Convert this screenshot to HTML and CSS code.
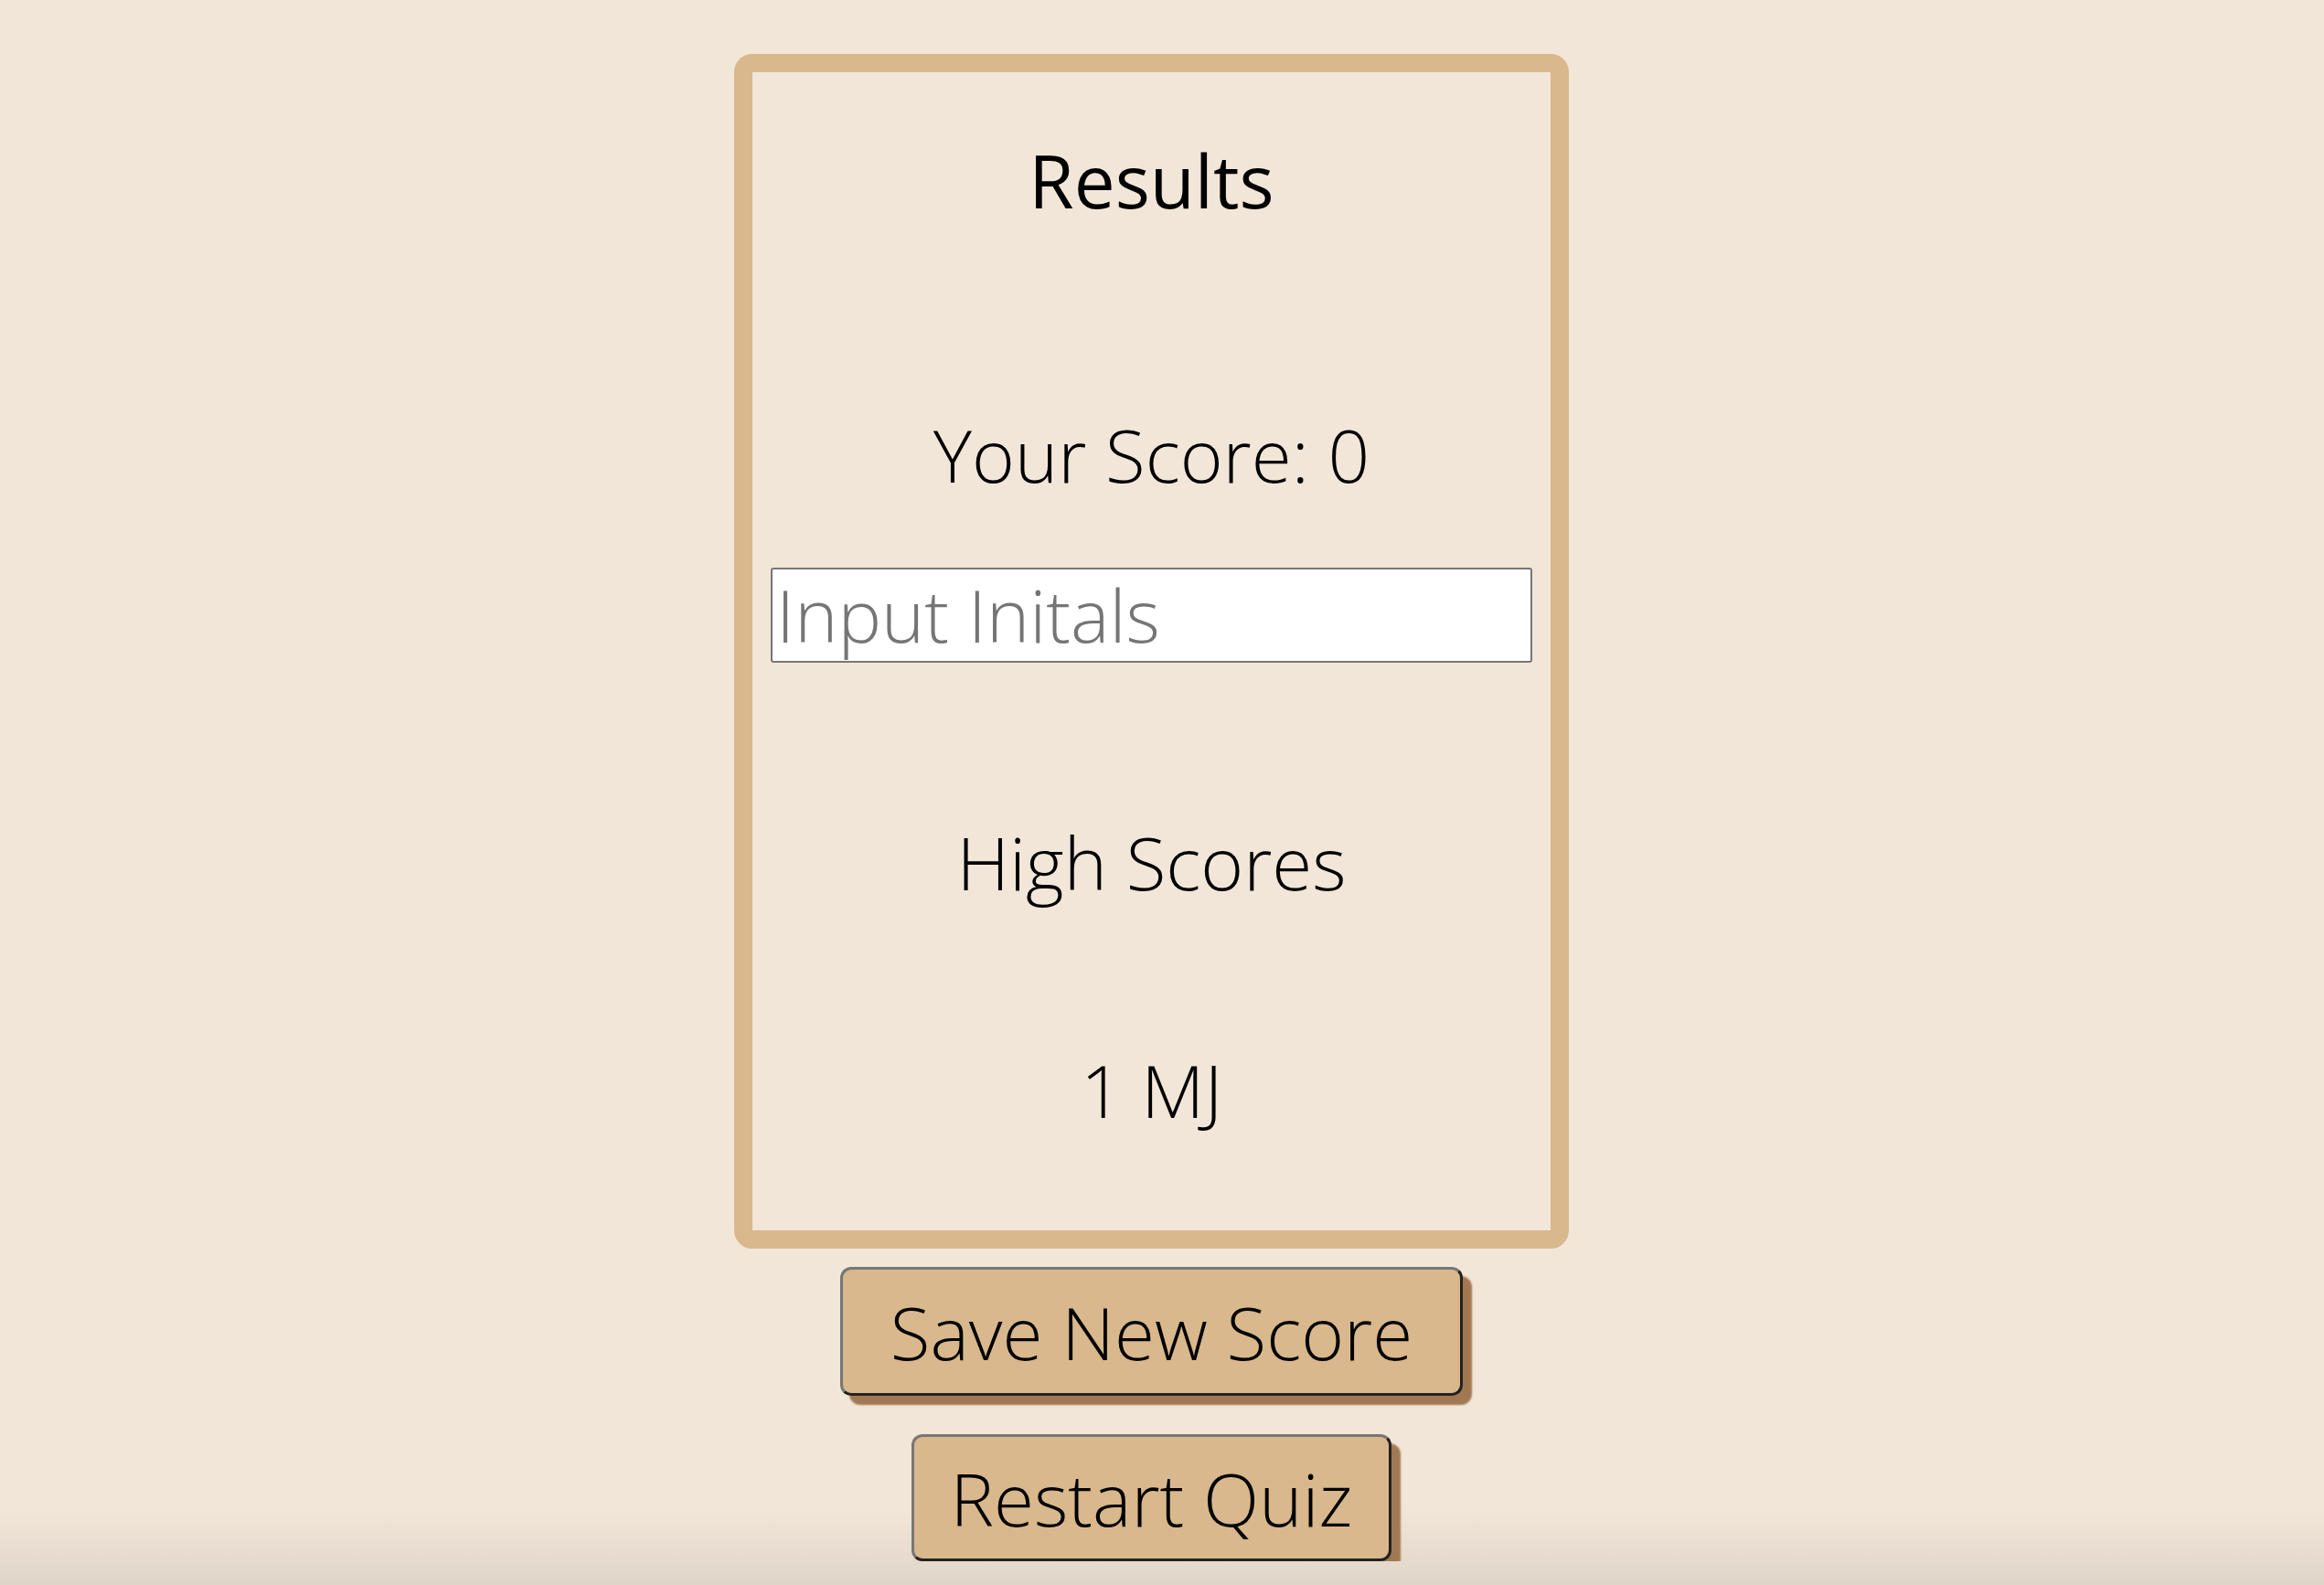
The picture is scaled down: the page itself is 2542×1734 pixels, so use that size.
FILE: index.html
```html
<!DOCTYPE html>
<html lang="en">
<head>
<meta charset="utf-8">
<title>Quiz Results</title>
<link rel="stylesheet" href="styles.css">
</head>
<body>
<main class="page">
  <section class="card">
    <h1 class="title">Results</h1>
    <p class="score">Your Score: 0</p>
    <input class="initials" type="text" placeholder="Input Initals">
    <h2 class="hs-title">High Scores</h2>
    <ol class="hs-list">
      <li class="hs-item">1 MJ</li>
    </ol>
  </section>
  <button class="btn btn-save">Save New Score</button>
  <button class="btn btn-restart">Restart Quiz</button>
</main>
</body>
</html>
```
FILE: styles.css
```css
html {
  height: 100%;
  background: linear-gradient(to bottom, #f2e6d8 0, #f2e6d8 1650px, #dfd5c9 1734px);
  background-repeat: no-repeat;
  background-color: #f2e6d8;
}
body {
  margin: 0;
  font-family: "Open Sans", "Lato", sans-serif;
  font-weight: 300;
  color: #000;
}
.page {
  display: flex;
  flex-direction: column;
  align-items: center;
  padding: 59px 23px 0 0;
}
.card {
  box-sizing: border-box;
  width: 913px;
  height: 1307px;
  border: 20px solid #d8b88c;
  border-radius: 20px;
  padding: 70px 20px 0;
  display: flex;
  flex-direction: column;
  align-items: center;
  text-align: center;
}
.title, .score, .hs-title, .hs-item {
  margin: 0;
  font-size: 80px;
  line-height: 96px;
  font-weight: 300;
}
.title {
  font-weight: 400;
}
.score {
  margin-top: 204px;
}
.initials {
  box-sizing: border-box;
  margin-top: 76px;
  width: 833px;
  height: 104px;
  border: 2px solid #767676;
  border-radius: 3px;
  background: #fff;
  padding: 0 4px 4px;
  font-family: inherit;
  font-weight: 300;
  font-size: 80px;
  color: #000;
  outline: none;
}
.initials::placeholder {
  color: #757575;
}
.hs-title {
  margin-top: 170px;
}
.hs-list {
  list-style: none;
  margin: 153px 0 0;
  padding: 0;
}
.btn {
  box-sizing: border-box;
  height: 141px;
  padding: 0 52px;
  background: #d8b88c;
  border: 3px solid;
  border-color: #777 #222 #222 #777;
  border-radius: 12px;
  box-shadow: 10px 10px 2px #a17852;
  font-family: inherit;
  font-weight: 300;
  font-size: 80px;
  color: #000;
}
.btn-save {
  margin-top: 20px;
}
.btn-restart {
  margin-top: 42px;
  height: 139px;
  padding: 0 40px;
}
```
